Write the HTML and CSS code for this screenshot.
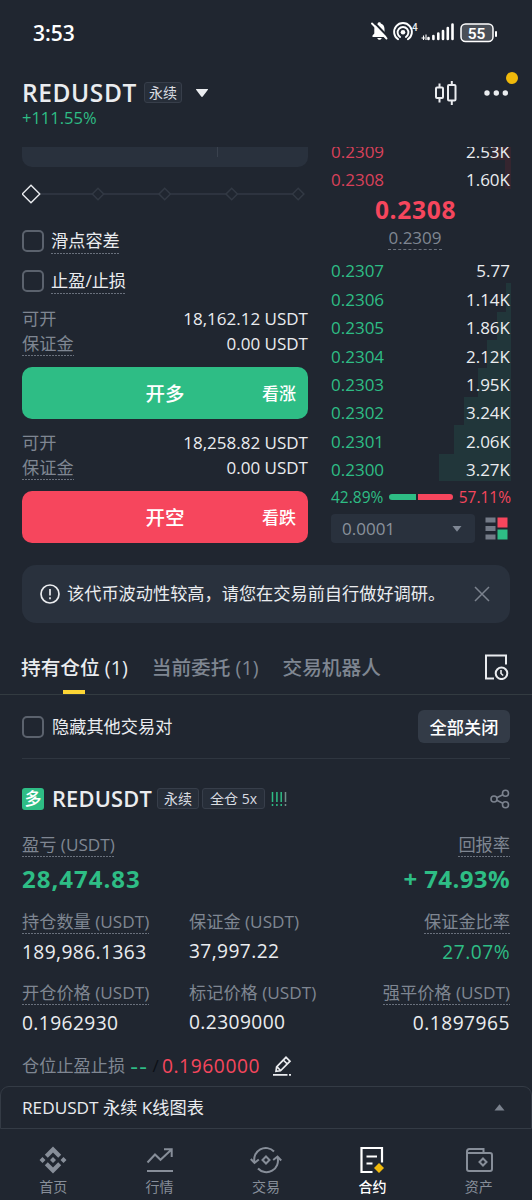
FILE: index.html
```html
<!DOCTYPE html>
<html lang="zh-CN">
<head>
  <meta charset="UTF-8" />
  <meta name="viewport" content="width=device-width, initial-scale=1.0"/>
  <title>REDUSDT 永续</title>
  <link rel="stylesheet" href="styles.css">
</head>
<body>
  <div class="statusbar">
    <span class="time">3:53</span>
    <svg class="status-icons" width="128" height="24" viewBox="0 0 128 24" fill="none">
      <!-- muted bell -->
      <g transform="translate(3 0)">
        <path d="M2.500 18h14v-1.500l-2-2V10c0-3.200-1.600-5-3.700-5.600C10.600 3 8 3 7.900 4.400 5.600 5 4.300 7.200 4.300 10v4.500L2.500 16.500z" fill="#fff"/>
        <path d="M7.300 19h4.400c-.4 2.400-4 2.400-4.400 0z" fill="#fff"/>
        <path d="M3.500 2.800L19 18.800" stroke="#202630" stroke-width="2"/>
        <path d="M2 4.500L16.500 19.500" stroke="#fff" stroke-width="1.900" stroke-linecap="round"/>
      </g>
      <!-- hotspot -->
      <g transform="translate(2.500 0)">
        <circle cx="33.500" cy="13.200" r="2.300" fill="#fff"/>
        <path d="M30.600 18a5.400 5.400 0 1 1 5.800 0" stroke="#fff" stroke-width="1.900" stroke-linecap="round"/>
        <path d="M28.600 20.300a8.900 8.900 0 1 1 9.800 0" stroke="#fff" stroke-width="1.900" stroke-linecap="round"/>
      </g>
      <!-- signal -->
      <path d="M61.500 19v1M66.400 17v3M71.300 14.500v5.500M76 12v8M80.800 9v11M85.500 5.500v14.500" stroke="#fff" stroke-width="2.600" stroke-linecap="round"/>
      <path d="M54.500 19h3.500M56.500 16.500v4.500M59 15.500v5.500" stroke="#fff" stroke-width="1.100"/>
      <!-- battery -->
      <rect x="94" y="5" width="32" height="17.500" rx="4.500" fill="#4a4f57" stroke="#fff" stroke-width="1.500"/>
    </svg>
    <span class="hotspot-count">4</span>
    <span class="battery">55</span>
    <span class="battery-tip"></span>
  </div>

  <header>
    <div class="symbol">
      <div class="symbol-row">
        <h1>REDUSDT</h1>
        <span class="tag">永续</span>
        <svg class="caret" width="14" height="10" viewBox="0 0 14 10"><path d="M1.500 1h11q1 0 .4.800L7.800 8.600q-.8.800-1.600 0L1.100 1.800Q.5 1 1.500 1z" fill="#eaecef"/></svg>
      </div>
      <div class="change">+111.55%</div>
    </div>
    <div class="header-actions">
      <svg width="24" height="26" viewBox="0 0 24 26" fill="none" stroke="#eaecef" stroke-width="2">
        <rect x="2" y="7.500" width="7" height="10.500" rx="1"/>
        <path d="M5.500 3.500v4M5.500 18v4.500"/>
        <rect x="14" y="5" width="7.500" height="15.500" rx="1"/>
        <path d="M17.800 1v4M17.800 20.500v4.500"/>
      </svg>
      <svg class="more" width="24" height="8" viewBox="0 0 24 8" fill="#eaecef">
        <circle cx="3" cy="4" r="2.700"/><circle cx="12.300" cy="4" r="2.700"/><circle cx="21.300" cy="4" r="2.700"/>
      </svg>
      <span class="notice-dot"></span>
    </div>
  </header>

  <main class="trade">
    <section class="order-form">
      <div class="input-tail"><span></span></div>
      <svg class="slider" width="286" height="54" viewBox="0 0 286 54" fill="#202630" stroke="#323944" stroke-width="1.500">
        <path d="M19 27h256"/>
        <path d="M70.300 27l5.700-5.700 5.700 5.700-5.700 5.700z"/>
        <path d="M137 27l5.700-5.700 5.700 5.700-5.700 5.700z"/>
        <path d="M204 27l5.700-5.700 5.700 5.700-5.700 5.700z"/>
        <path d="M270.500 27l5.700-5.700 5.700 5.700-5.700 5.700z"/>
        <path d="M.200 27L9 18.200l8.800 8.800L9 35.800z" stroke="#eaecef" stroke-width="1.400"/>
      </svg>
      <label class="check"><span class="box"></span><span class="dotted">滑点容差</span></label>
      <label class="check"><span class="box"></span><span class="dotted">止盈/止损</span></label>

      <div class="info first">
        <div class="info-row"><span>可开</span><b>18,162.12 USDT</b></div>
        <div class="info-row"><span class="dotted">保证金</span><b>0.00 USDT</b></div>
      </div>
      <button class="btn buy">开多<small>看涨</small></button>
      <div class="info">
        <div class="info-row"><span>可开</span><b>18,258.82 USDT</b></div>
        <div class="info-row"><span class="dotted">保证金</span><b>0.00 USDT</b></div>
      </div>
      <button class="btn sell">开空<small>看跌</small></button>
    </section>

    <section class="book">
      <div class="asks">
        <div class="level ask"><i style="width: 19px"></i><span>0.2309</span><b>2.53K</b></div>
        <div class="level ask"><i style="width: 6px"></i><span>0.2308</span><b>1.60K</b></div>
      </div>
      <div class="last-price">0.2308</div>
      <div class="mark-price"><span>0.2309</span></div>
      <div class="bids">
        <div class="level bid"><span>0.2307</span><b>5.77</b></div>
        <div class="level bid"><i style="width: 5px"></i><span>0.2306</span><b>1.14K</b></div>
        <div class="level bid"><i style="width: 14px"></i><span>0.2305</span><b>1.86K</b></div>
        <div class="level bid"><i style="width: 24px"></i><span>0.2304</span><b>2.12K</b></div>
        <div class="level bid"><i style="width: 33px"></i><span>0.2303</span><b>1.95K</b></div>
        <div class="level bid"><i style="width: 47px"></i><span>0.2302</span><b>3.24K</b></div>
        <div class="level bid"><i style="width: 57px"></i><span>0.2301</span><b>2.06K</b></div>
        <div class="level bid"><i style="width: 72px"></i><span>0.2300</span><b>3.27K</b></div>
      </div>
      <div class="ratio">
        <span class="green">42.89%</span>
        <span class="ratio-bar"><i class="long" style="flex-grow: 42.89"></i><i class="short" style="flex-grow: 57.11"></i></span>
        <span class="red">57.11%</span>
      </div>
      <div class="book-tools">
        <div class="select">0.0001
          <svg width="10" height="6" viewBox="0 0 10 6"><path d="M.5 0h9L5 5.800z" fill="#7f8794"/></svg>
        </div>
        <svg width="23" height="23" viewBox="0 0 23 23">
          <path d="M.500.500h10v5H.500zM.500 9h10v5H.500zM.500 17.500h10v5H.500z" fill="#747b87"/>
          <path d="M12.500.500h10v10h-10z" fill="#f6465d"/>
          <path d="M12.500 12.500h10v10h-10z" fill="#2ebd85"/>
        </svg>
      </div>
    </section>
  </main>

  <div class="alert">
    <svg width="20" height="20" viewBox="0 0 20 20" fill="none" stroke="#eaecef" stroke-width="1.700">
      <circle cx="10" cy="10" r="9"/><path d="M10 5v6.500M10 13.200v2"/>
    </svg>
    <span>该代币波动性较高，请您在交易前自行做好调研。</span>
    <svg class="close" width="16" height="16" viewBox="0 0 16 16" stroke="#7b828e" stroke-width="1.500"><path d="M1 1l14 14M15 1L1 15"/></svg>
  </div>

  <nav class="tabs">
    <a class="active">持有仓位 (1)</a>
    <a>当前委托 (1)</a>
    <a>交易机器人</a>
    <svg width="25" height="26" viewBox="0 0 25 26" fill="none" stroke="#eaecef" stroke-width="2">
      <path d="M22 10.500V1.500H2v23h8"/>
      <circle cx="17.500" cy="19.300" r="5.800"/>
      <path d="M17 16v3.500l2.200 2" stroke-width="1.600"/>
    </svg>
  </nav>

  <div class="filter">
    <label class="check"><span class="box"></span><span>隐藏其他交易对</span></label>
    <button class="close-all">全部关闭</button>
  </div>

  <section class="position">
    <div class="position-head">
      <span class="side">多</span>
      <h2>REDUSDT</h2>
      <span class="tag">永续</span>
      <span class="tag">全仓 5x</span>
      <svg class="risk" width="16" height="16" viewBox="0 0 16 16" stroke-width="1.500">
        <path d="M1.500 1v10M1.500 13v2M5.900 1v10M5.900 13v2M10.200 1v10M10.200 13v2" stroke="#2ebd85"/>
        <path d="M14.500 1v10M14.500 13v2" stroke="#6f8f88"/>
      </svg>
      <svg class="share" width="20" height="20" viewBox="0 0 20 20" fill="none" stroke="#7b828e" stroke-width="1.600">
        <circle cx="4" cy="10" r="3"/><circle cx="15.500" cy="4.300" r="3"/><circle cx="15.500" cy="15.700" r="3"/>
        <path d="M6.700 8.700l6.100-3M6.700 11.300l6.100 3"/>
      </svg>
    </div>

    <div class="pnl">
      <div><span class="dotted">盈亏 (USDT)</span><strong>28,474.83</strong></div>
      <div class="right"><span class="dotted">回报率</span><strong class="roi">+ 74.93%</strong></div>
    </div>

    <div class="stats">
      <div><span class="dotted">持仓数量 (USDT)</span><b>189,986.1363</b></div>
      <div class="mid"><span>保证金 (USDT)</span><b>37,997.22</b></div>
      <div class="right"><span class="dotted">保证金比率</span><b class="green">27.07%</b></div>
      <div><span class="dotted">开仓价格 (USDT)</span><b>0.1962930</b></div>
      <div class="mid"><span>标记价格 (USDT)</span><b>0.2309000</b></div>
      <div class="right"><span class="dotted">强平价格 (USDT)</span><b>0.1897965</b></div>
    </div>

    <div class="tpsl">
      <span class="label">仓位止盈止损</span>
      <span class="green dash">--</span>
      <span class="slash">/</span>
      <span class="red stop">0.1960000</span>
      <svg width="20" height="20" viewBox="0 0 20 20" fill="none" stroke="#eaecef" stroke-width="1.700">
        <path d="M4 15.300l.6-4.500L14 1.300l4 3.900-9.500 9.600zM11.300 4l4 4M5 10.800l3.700 3.700"/>
        <path d="M1 18.800h14.500M17 18.800h2"/>
      </svg>
    </div>
  </section>

  <div class="chart-sheet">
    <span>REDUSDT 永续 K线图表</span>
    <svg width="11" height="7" viewBox="0 0 11 7"><path d="M5.500.300L10.500 6.500H.500z" fill="#7b828e"/></svg>
  </div>

  <footer>
    <a>
      <svg width="32" height="28" viewBox="0 0 32 28" fill="#878e99">
        <path d="M16 .500l8.200 8.200-3 3L16 6.500l-5.200 5.200-3-3zM16 27.500l-8.200-8.200 3-3 5.200 5.200 5.200-5.200 3 3zM16 11l3 3-3 3-3-3zM5.500 11l3 3-3 3-3-3zM26.500 11l3 3-3 3-3-3z"/>
      </svg>
      首页
    </a>
    <a>
      <svg width="32" height="28" viewBox="0 0 32 28" fill="none" stroke="#878e99" stroke-width="2">
        <path d="M3.500 16.500l7.500-8 5.500 5.300L27 4M20 3.300h7.700V11M3 25h26"/>
      </svg>
      行情
    </a>
    <a>
      <svg width="32" height="28" viewBox="0 0 32 28" fill="none" stroke="#878e99" stroke-width="2">
        <path d="M24 5.500A11.500 11.500 0 0 0 4.500 16M8 22.500A11.500 11.500 0 0 0 27.500 11.500"/>
        <path d="M.800 13l3.700 4 4.300-3.500M31.200 14.500l-3.700-4-4.300 3.500"/>
        <path d="M16 10.500l3.500 3.500-3.500 3.500-3.500-3.500z"/>
      </svg>
      交易
    </a>
    <a class="active">
      <svg width="32" height="28" viewBox="0 0 32 28" fill="none" stroke="#fff" stroke-width="2.200">
        <path d="M16.500 26H5.500V2h20.500v14.500M10.500 10.500h10.500M10.500 17.500h6"/>
        <path d="M23 17l5 5-5 5-5-5z" fill="#f0b90b" stroke="none"/>
      </svg>
      合约
    </a>
    <a>
      <svg width="32" height="28" viewBox="0 0 32 28" fill="none" stroke="#878e99" stroke-width="2">
        <path d="M20.500 7V3H6.500q-2.500 0-2.500 2.500V23q0 2 2 2h21q2 0 2-2V9q0-2-2-2H4"/>
        <path d="M20 12.500l3.500 3.500-3.500 3.500-3.500-3.500z"/>
      </svg>
      资产
    </a>
  </footer>
</body>
</html>
```

FILE: styles.css
```css
* {
  box-sizing: border-box;
}

body {
  width: 532px;
  height: 1200px;
  margin: 0;
  overflow: hidden;
  background-color: #202630;
  color: #eaecef;
  font-family: 'Open Sans', 'Noto Sans CJK SC', sans-serif;
  font-size: 17.2px;
  line-height: 24px;
  white-space: nowrap;
}

h1, h2 {
  margin: 0;
  font-weight: 600;
}

b {
  font-weight: 400;
}

svg {
  display: block;
  flex: none;
}

button {
  border: none;
  padding: 0;
  color: #fff;
  font-family: inherit;
}

.green { color: #2ebd85; }
.red { color: #f6465d; }

.dotted {
  position: relative;
}

.dotted::after {
  content: "";
  position: absolute;
  left: 0;
  right: 0;
  bottom: -1px;
  height: 1px;
  background: repeating-linear-gradient(90deg, #69707c 0 2px, transparent 2px 3px);
}

/* status bar */
.statusbar {
  position: relative;
  display: flex;
  justify-content: space-between;
  align-items: center;
  height: 66px;
  padding: 0 37px 0 33px;
}

.time {
  font-size: 21px;
  font-weight: 600;
  color: #fff;
}

.status-icons {
  margin-top: -4px;
}

.hotspot-count {
  position: absolute;
  left: 412px;
  top: 22px;
  font: 500 10px/12px Roboto, sans-serif;
}

.battery {
  position: absolute;
  left: 460px;
  top: 25px;
  width: 33px;
  text-align: center;
  font: 600 15.500px/18px Roboto, sans-serif;
  color: #fff;
}

.battery-tip {
  position: absolute;
  left: 495px;
  top: 31px;
  width: 2px;
  height: 6px;
  border-radius: 1px;
  background: #fff;
}

/* symbol header */
header {
  display: flex;
  justify-content: space-between;
  height: 81px;
  padding: 11px 24px 0 22px;
}

.symbol-row {
  display: flex;
  align-items: center;
  height: 31px;
}

h1 {
  width: 122px;
  font-size: 24.5px;
  letter-spacing: 0.6px;
}

.tag {
  height: 21px;
  padding: 0 6px;
  border: 1px solid #373e4a;
  border-radius: 3px;
  background: #272e39;
  font-size: 14px;
  line-height: 19px;
  color: #d9dce1;
}

.symbol .tag {
  padding: 0 4px;
}

.caret {
  margin-left: 13px;
}

.change {
  height: 20px;
  font-size: 16.500px;
  line-height: 20px;
  color: #2ebd85;
}

.header-actions {
  position: relative;
  display: flex;
  align-items: center;
  gap: 26px;
  height: 32px;
}

.notice-dot {
  position: absolute;
  right: -10px;
  top: -5px;
  width: 12px;
  height: 12px;
  border-radius: 50%;
  background: #f0b90b;
}

/* trade area */
.trade {
  display: grid;
  grid-template-columns: 286px 180px;
  column-gap: 23px;
  height: 396px;
  padding-left: 22px;
  overflow: hidden;
}

.input-tail {
  height: 20px;
  padding-left: 195px;
  border-radius: 0 0 10px 10px;
  background: #29313d;
}

.input-tail span {
  display: block;
  width: 1px;
  height: 10px;
  background: #3a424e;
}

.check {
  display: flex;
  align-items: center;
  gap: 8px;
  height: 40px;
}

.order-form .check {
  gap: 7px;
}

.box {
  width: 22px;
  height: 22px;
  border: 2px solid #5b626d;
  border-radius: 5px;
}

.info {
  padding: 11px 0;
}

.info.first {
  padding-top: 5px;
}

.info-row {
  display: flex;
  justify-content: space-between;
  align-items: center;
  height: 25px;
  color: #7f8692;
}

.info-row .dotted::after {
  bottom: 0;
}

.info-row b {
  color: #eaecef;
  font-size: 17px;
}

.btn {
  display: grid;
  grid-template-columns: 1fr auto 1fr;
  grid-auto-flow: column;
  align-items: center;
  width: 100%;
  height: 52px;
  padding-bottom: 1px;
  border-radius: 10px;
  font-size: 19.5px;
  font-weight: 500;
}

.btn::before {
  content: "";
}

.btn small {
  justify-self: end;
  padding-right: 12px;
  font-size: 17px;
}

.buy { background: #2ebd85; }
.sell { background: #f6465d; }

/* order book */
.asks {
  margin-top: -10px;
}

.level {
  position: relative;
  display: flex;
  justify-content: space-between;
  align-items: center;
  height: 28.4px;
  padding: 1px 1px 0 0;
  font-size: 17px;
}

.level i {
  position: absolute;
  right: 0;
  top: -2px;
  height: 28.4px;
}

.level b {
  position: relative;
}

.ask { color: #d9415a; }
.ask i { top: -5px; background: #35252f; }
.bid { color: #2ebd85; }
.bid i { background: #21363a; }
.level b { color: #eaecef; }

.bid:last-child i {
  height: 27px;
}

.last-price {
  padding-right: 11px;
  font-size: 24.5px;
  font-weight: 700;
  letter-spacing: 0.7px;
  line-height: 32px;
  text-align: center;
  color: #f6465d;
}

.mark-price {
  height: 31px;
  padding-right: 12px;
  text-align: center;
  color: #7f8692;
  font-size: 17px;
}

.mark-price span {
  display: inline-block;
  border-bottom: 1px dashed #69707c;
  line-height: 23px;
}

.ratio {
  display: flex;
  align-items: center;
  gap: 6px;
  height: 25px;
  padding-top: 1px;
  font-size: 15.500px;
}

.ratio-bar {
  display: flex;
  flex: 1;
  gap: 2px;
}

.ratio-bar i {
  height: 6px;
}

.long { background: #2ebd85; border-radius: 3px 0 0 3px; }
.short { background: #f6465d; border-radius: 0 3px 3px 0; }

.book-tools {
  display: flex;
  align-items: center;
  justify-content: space-between;
  margin-top: 5px;
  padding-right: 3px;
}

.select {
  display: flex;
  align-items: center;
  justify-content: space-between;
  width: 144px;
  height: 29px;
  padding: 1px 13px 0 11px;
  border-radius: 4px;
  background: #29313d;
  color: #8a919c;
  font-size: 17px;
}

/* risk notice */
.alert {
  display: flex;
  align-items: center;
  height: 58px;
  margin: 22px 22px 0;
  padding: 0 20px 0 18px;
  border-radius: 14px;
  background: #29313d;
}

.alert span {
  margin-left: 7px;
}

.close {
  margin-left: auto;
}

/* tabs */
.tabs {
  display: flex;
  align-items: center;
  height: 72px;
  padding: 17px 23px 0 21px;
  border-bottom: 1px solid #333b41;
}

.tabs a {
  position: relative;
  height: 54px;
  margin-right: 24px;
  font-size: 19.700px;
  font-weight: 500;
  line-height: 55px;
  color: #7f8692;
}

.tabs .active {
  color: #eaecef;
}

.tabs .active::after {
  content: "";
  position: absolute;
  left: 42px;
  bottom: 0;
  width: 22px;
  height: 4px;
  background: #fcd535;
}

.tabs svg {
  margin-left: auto;
}

.filter {
  display: flex;
  justify-content: space-between;
  align-items: center;
  height: 64px;
  margin: 0 22px;
  border-bottom: 1px solid #2f3640;
}

.close-all {
  width: 92px;
  height: 33px;
  border-radius: 6px;
  background: #333b47;
  font-size: 17.2px;
  font-weight: 500;
}

/* position card */
.position {
  height: 327px;
  padding: 27px 22px 0;
}

.position-head {
  display: flex;
  align-items: center;
  height: 25px;
}

.side {
  width: 22px;
  height: 22px;
  border-radius: 3px;
  background: #2ebd85;
  font-size: 17px;
  font-weight: 500;
  line-height: 21px;
  text-align: center;
  color: #fff;
}

h2 {
  width: 105px;
  margin-left: 8px;
  font-size: 21.800px;
  letter-spacing: 0.2px;
}

.position-head .tag + .tag {
  margin-left: 3px;
  padding: 0 7px;
}

.risk {
  margin-left: 6px;
}

.share {
  margin-left: auto;
}

.pnl {
  display: flex;
  justify-content: space-between;
  height: 71px;
  padding-top: 22px;
  color: #7f8692;
}

.pnl .dotted::after,
.stats .dotted::after {
  bottom: 0;
}

.pnl div, .stats div {
  display: flex;
  flex-direction: column;
  align-items: flex-start;
}

.pnl .right, .stats .right {
  align-items: flex-end;
}

.pnl strong {
  font-size: 24px;
  letter-spacing: 1px;
  line-height: 44px;
  color: #2ebd85;
}

.pnl .roi {
  letter-spacing: 0.4px;
}

.stats {
  display: grid;
  grid-template-columns: 167px 150px 1fr;
  grid-auto-rows: 71px;
  padding-top: 28px;
  color: #7f8692;
}

.stats b {
  font-size: 19.200px;
  letter-spacing: 0.4px;
  line-height: 36px;
  color: #eaecef;
}

.stats .right b {
  letter-spacing: 0.5px;
}

.stats .green {
  color: #2ebd85;
}

.stats .mid b {
  margin-top: -1px;
}

.tpsl {
  display: flex;
  align-items: center;
  height: 24px;
  margin-top: 2px;
}

.tpsl .label {
  color: #7f8692;
}

.dash {
  margin-left: 5px;
  font-size: 24px;
  letter-spacing: 1.5px;
}

.slash {
  margin-left: 4px;
  color: #0c1016;
}

.stop {
  margin: 0 12px 0 3px;
  font-size: 19.200px;
  letter-spacing: 0.6px;
}

/* chart drawer */
.chart-sheet {
  display: flex;
  justify-content: space-between;
  align-items: center;
  height: 43px;
  padding: 0 26px 0 21px;
  border: 1px solid #343b45;
  border-radius: 9px 9px 0 0;
}

/* bottom nav */
footer {
  display: grid;
  grid-template-columns: repeat(5, 1fr);
  height: 71px;
  padding-top: 17px;
}

footer a {
  display: flex;
  flex-direction: column;
  align-items: center;
  font-size: 14px;
  line-height: 26px;
  color: #878e99;
}

footer .active {
  color: #fff;
  font-weight: 500;
}
```
